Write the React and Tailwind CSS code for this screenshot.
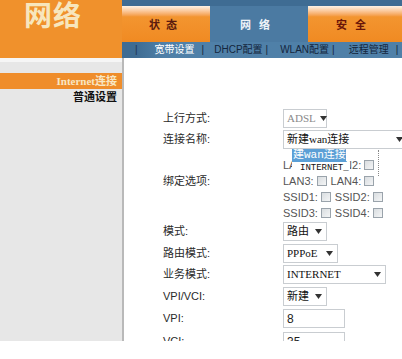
const Arrow = () => (
  <svg className="w-[7px] h-[5px] ml-auto shrink-0" viewBox="0 0 7 5">
    <path d="M0 0h7L3.5 5z" fill="#333" />
  </svg>
);

const Select = ({ children, w, disabled }) => (
  <div
    className={`${w} h-[19px] flex items-center border border-[#c9cdd1] bg-white pl-[3px] pr-[4px] text-[11px] leading-none ${disabled ? 'text-[#8a8a8a]' : 'text-[#111]'}`}
    style={{ fontFamily: '"Liberation Serif", "Noto Sans CJK SC", serif' }}
  >
    <span className="whitespace-nowrap mr-[4px]">{children}</span>
    <Arrow />
  </div>
);

const Box = () => (
  <span className="inline-block w-[10px] h-[10px] border border-[#9aa3ab] bg-gradient-to-br from-[#d9dde0] to-[#f4f5f6] mx-[3px]" />
);

const Check = ({ a, b }) => (
  <div className="h-[16px] flex items-center text-[11px] text-[#555] whitespace-nowrap">
    <span>{a}:</span>
    <Box />
    <span className="ml-[1px]">{b}:</span>
    <Box />
  </div>
);

const Row = ({ label, h, mb, children, labelPt }) => (
  <div className={`flex ${h} ${mb}`}>
    <div className={`w-[159px] shrink-0 pl-[39px] text-[11px] text-[#2a2a2a] ${labelPt || 'flex items-center'}`}>{label}</div>
    <div className="flex-1 flex items-start">{children}</div>
  </div>
);

export default function App() {
  return (
    <div
      className="w-[402px] h-[359px] bg-white overflow-hidden relative"
      style={{ fontFamily: 'Arial, "Liberation Sans", "Noto Sans CJK SC", sans-serif' }}
    >
      {/* header */}
      <div className="flex h-[58px]">
        <div className="w-[122px] bg-[#f0912c] pl-[24px] pt-[2px]">
          <span className="text-[28px] leading-[30px] font-bold text-[#f7e6bd] tracking-[1px]">网络</span>
        </div>
        <div className="flex-1 flex flex-col bg-[#4b7aa2]">
          <div className="h-[6px] bg-[#3f6c93]" />
          <div className="flex h-[36px]">
            <div className="w-[88px] bg-gradient-to-b from-[#fdf3e6] via-[#f3952f] via-30% to-[#f08a22] flex items-center justify-center pt-[3px] text-[11px] font-bold text-[#5a1a0e] tracking-[6px]">
              状态
            </div>
            <div className="w-[98px] flex items-center justify-center pt-[3px] text-[11px] font-bold text-[#eef3f8] tracking-[8px]">
              网络
            </div>
            <div className="flex-1 bg-gradient-to-b from-[#fdf3e6] via-[#f3952f] via-30% to-[#f08a22] flex items-center justify-center pt-[3px] text-[11px] font-bold text-[#6a1508] tracking-[8px]">
              安全
            </div>
          </div>
          <div className="h-[16px] flex items-center text-[10px] leading-none text-[#14263d] bg-gradient-to-r from-[#3f6c93] from-5% to-[#4f80a8] to-15% whitespace-nowrap">
            <span className="ml-[13px] text-[#1e3550]">|</span>
            <span className="ml-[17px] text-white">宽带设置</span>
            <span className="ml-[7px]">|</span>
            <span className="ml-[10px]">DHCP配置</span>
            <span className="ml-[3px]">|</span>
            <span className="ml-[12px]">WLAN配置</span>
            <span className="ml-[3px]">|</span>
            <span className="ml-[14px]">远程管理</span>
            <span className="ml-[7px]">|</span>
          </div>
        </div>
      </div>

      {/* body */}
      <div className="flex h-[283px] overflow-hidden">
        <div className="w-[122px] shrink-0 bg-[#e7e7e7] flex flex-col">
          <div className="h-[4px] bg-[#f6f6f6]" />
          <div className="h-[11px]" />
          <div className="h-[16px] bg-[#ef8d2b] flex items-center justify-end pr-[5px] text-[11px] font-bold text-[#f8e7c4]" style={{ fontFamily: '"Liberation Serif", "Noto Sans CJK SC", serif' }}>
            Internet连接
          </div>
          <div className="h-[17px] flex items-center justify-end pr-[5px] text-[11px] font-bold text-[#111]">
            普通设置
          </div>
        </div>
        <div className="flex-1 border-l-2 border-[#b9b9b9] relative overflow-hidden">
          <div className="pt-[51px]">
            <Row label="上行方式:" h="h-[19px]" mb="mb-[2px]">
              <Select w="w-[44px]" disabled>ADSL</Select>
            </Row>
            <Row label="连接名称:" h="h-[19px]" mb="mb-[1px]">
              <Select w="w-[125px]">新建wan连接</Select>
            </Row>
            <Row label="绑定选项:" h="h-[72px]" mb="mb-0" labelPt="pt-[23px]">
              <div className="flex flex-col pt-[7px]">
                <Check a="LAN1" b="LAN2" />
                <Check a="LAN3" b="LAN4" />
                <Check a="SSID1" b="SSID2" />
                <Check a="SSID3" b="SSID4" />
              </div>
            </Row>
            <Row label="模式:" h="h-[19px]" mb="mb-[3px]">
              <Select w="w-[44px]">路由</Select>
            </Row>
            <Row label="路由模式:" h="h-[19px]" mb="mb-[2px]">
              <Select w="w-[55px]">PPPoE</Select>
            </Row>
            <Row label="业务模式:" h="h-[19px]" mb="mb-[3px]">
              <Select w="w-[103px]">INTERNET</Select>
            </Row>
            <Row label="VPI/VCI:" h="h-[19px]" mb="mb-[3px]">
              <Select w="w-[44px]">新建</Select>
            </Row>
            <Row label="VPI:" h="h-[19px]" mb="mb-[4px]">
              <div className="w-[62px] h-[19px] border border-[#c9cdd1] px-[3px] flex items-center text-[12px] text-[#222]">8</div>
            </Row>
            <Row label="VCI:" h="h-[19px]" mb="mb-0">
              <div className="w-[62px] h-[19px] border border-[#c9cdd1] px-[3px] flex items-center text-[12px] text-[#222]">35</div>
            </Row>
          </div>

          {/* open dropdown list */}
          <div className="absolute left-[168px] top-[91px] flex flex-col items-start text-[11px] leading-none" style={{ fontFamily: '"Liberation Mono", "Noto Sans CJK SC", monospace' }}>
            <div className="w-[54px] h-[13px] bg-[#5b9fd6] text-white flex items-center px-[1px] whitespace-nowrap overflow-hidden">建wan连接</div>
            <div className="h-[13px] bg-white text-[#111] flex items-center pl-[8px] pr-[1px] text-[9px] whitespace-nowrap">INTERNET_</div>
          </div>
          <div className="absolute left-[254px] top-[92px] h-[26px] border-l border-dotted border-[#888]" />
        </div>
      </div>
    </div>
  );
}
